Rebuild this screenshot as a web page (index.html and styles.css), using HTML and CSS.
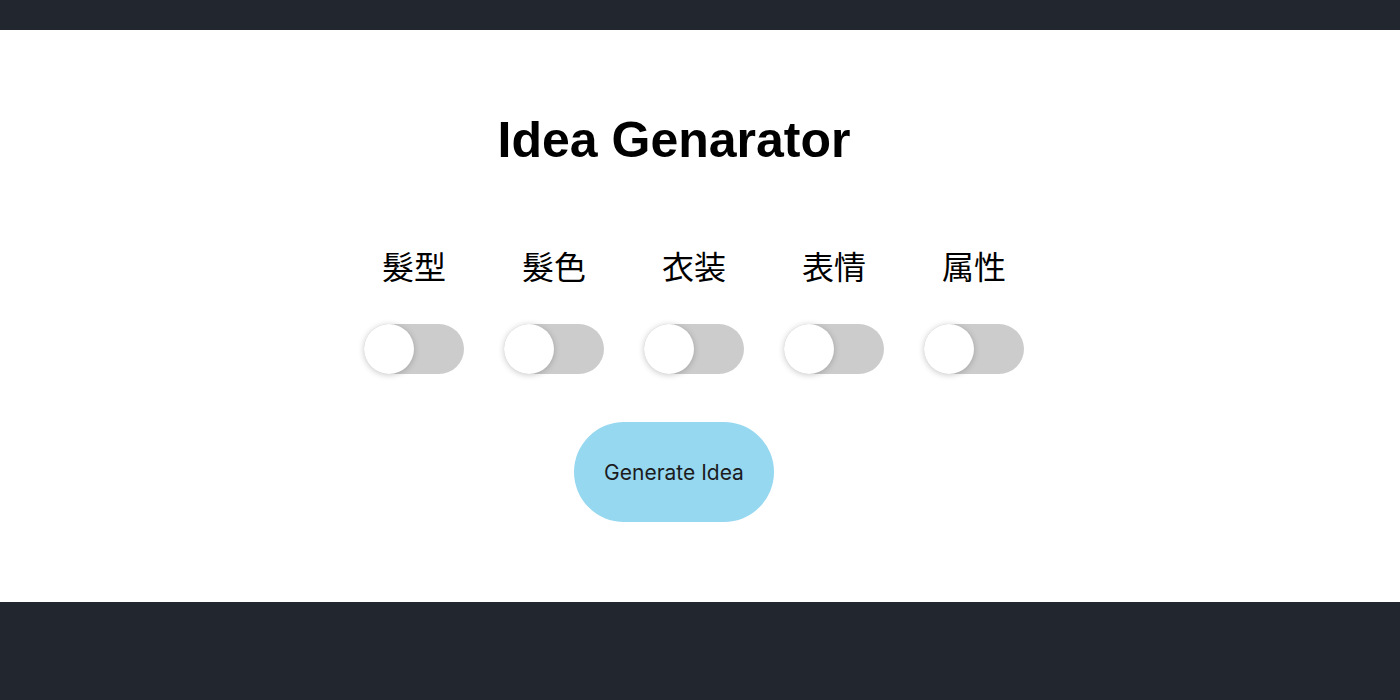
FILE: index.html
```html
<!DOCTYPE html>
<html lang="ja">
<head>
<meta charset="utf-8">
<title>Idea Genarator</title>
<link rel="stylesheet" href="styles.css">
</head>
<body>
<div class="topbar"></div>
<main class="main">
  <h1 class="title">Idea Genarator</h1>
  <div class="options">
    <div class="option">
      <span class="label">髮型</span>
      <span class="toggle"><span class="knob"></span></span>
    </div>
    <div class="option">
      <span class="label">髮色</span>
      <span class="toggle"><span class="knob"></span></span>
    </div>
    <div class="option">
      <span class="label">衣装</span>
      <span class="toggle"><span class="knob"></span></span>
    </div>
    <div class="option">
      <span class="label">表情</span>
      <span class="toggle"><span class="knob"></span></span>
    </div>
    <div class="option">
      <span class="label">属性</span>
      <span class="toggle"><span class="knob"></span></span>
    </div>
  </div>
  <button class="generate">Generate Idea</button>
</main>
<div class="bottombar"></div>
</body>
</html>
```
FILE: styles.css
```css
html, body {
  margin: 0;
  padding: 0;
  background: #22262e;
}
.topbar {
  height: 30px;
}
.main {
  background: #ffffff;
  height: 572px;
  box-sizing: border-box;
  padding-right: 52px;
  display: flex;
  flex-direction: column;
  align-items: center;
}
.title {
  margin: 85px 0 0 0;
  font-family: "Liberation Sans", Arial, sans-serif;
  font-weight: bold;
  font-size: 50px;
  line-height: 50px;
  color: #000;
}
.options {
  display: flex;
  margin-top: 84px;
}
.option {
  display: flex;
  flex-direction: column;
  align-items: center;
  margin-left: 40px;
  width: 100px;
}
.label {
  font-family: "Noto Sans CJK JP", "Noto Sans CJK SC", sans-serif;
  font-size: 32px;
  line-height: 32px;
  height: 32px;
  color: #000;
}
.toggle {
  display: block;
  margin-top: 43px;
  width: 100px;
  height: 50px;
  border-radius: 25px;
  background: #cccccc;
  position: relative;
}
.knob {
  position: absolute;
  left: 0;
  top: 0;
  width: 50px;
  height: 50px;
  border-radius: 50%;
  background: #ffffff;
  box-shadow: 0 1px 6px rgba(0, 0, 0, 0.22);
}
.generate {
  margin-top: 48px;
  width: 200px;
  height: 100px;
  border: none;
  border-radius: 50px;
  background: #97d8f1;
  color: #1c1c1e;
  font-family: Inter, "Noto Sans", sans-serif;
  font-size: 21px;
  padding: 0;
}
```
